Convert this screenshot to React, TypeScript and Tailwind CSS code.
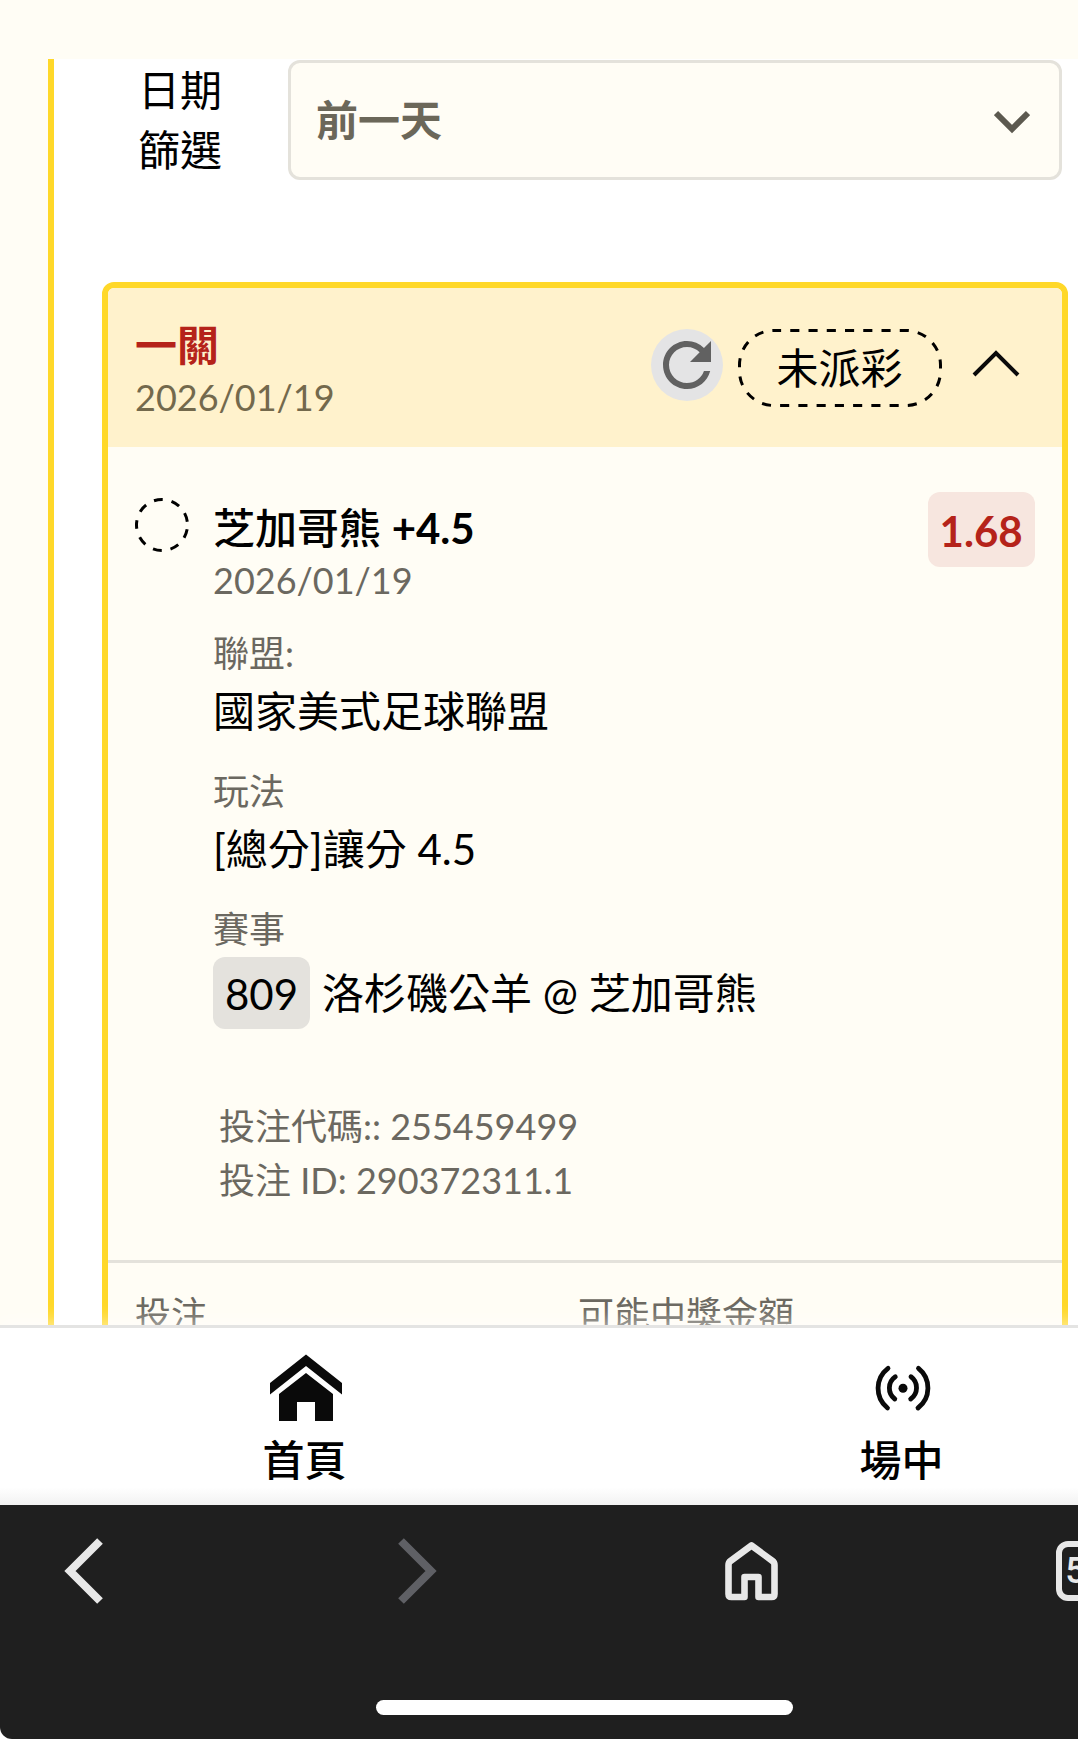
import React, { FC, ReactNode } from 'react';
import { MdRefresh } from 'react-icons/md';

interface Bet {
  title: string;
  date: string;
  team: string;
  handicap: string;
  odds: string;
  league: string;
  market: string;
  eventNo: string;
  event: string;
  code: string;
  id: string;
}

const bet: Bet = {
  title: '一關',
  date: '2026/01/19',
  team: '芝加哥熊',
  handicap: '+4.5',
  odds: '1.68',
  league: '國家美式足球聯盟',
  market: '[總分]讓分 4.5',
  eventNo: '809',
  event: '洛杉磯公羊 @ 芝加哥熊',
  code: '255459499',
  id: '290372311.1',
};

const DateFilter: FC = () => (
  <div className="flex pt-px pl-9 pr-1.5">
    <label htmlFor="date-filter" className="w-21 shrink-0 text-[42px] leading-[60px]">
      日期篩選
    </label>
    <div className="relative ml-[66px] flex-1">
      <select
        id="date-filter"
        defaultValue="yesterday"
        className="h-[120px] w-full appearance-none rounded-xl border-3 border-[#e4e2db] bg-[#fffdf5] pl-[25px] pr-20 text-[42px] font-bold text-[#6b6759]"
      >
        <option value="yesterday">前一天</option>
      </select>
      <svg
        className="pointer-events-none absolute top-[50px] right-8 h-6 w-9"
        viewBox="0 0 36 24"
        fill="none"
        stroke="#5c594f"
        strokeWidth="6"
      >
        <path d="M2 3l16 16L34 3" />
      </svg>
    </div>
  </div>
);

const StatusPill: FC<{ children: ReactNode }> = ({ children }) => (
  <div className="relative flex h-[78px] w-[204px] items-center justify-center text-[42px] leading-[54px]">
    <svg className="absolute inset-0" width="204" height="78" fill="none" stroke="black" strokeWidth="3">
      <rect
        x="1.5"
        y="1.5"
        width="201"
        height="75"
        rx="34.5"
        strokeDasharray="9.12 9.13"
        strokeDashoffset="2"
      />
    </svg>
    <span>{children}</span>
  </div>
);

const Detail: FC<{ label: string; children: ReactNode }> = ({ label, children }) => (
  <div>
    <dt className="mb-0.5 text-4xl leading-[52px] text-[#6b6860]">{label}</dt>
    <dd className="text-[42px] leading-[60px]">{children}</dd>
  </div>
);

const BetCard: FC<{ bet: Bet }> = ({ bet }) => (
  <article className="mt-[102px] overflow-hidden rounded-xl border-6 border-[#ffd829] bg-[#fffdf5]">
    <header className="flex items-start bg-[#fff2cc] pt-[31px] pr-[30px] pb-6 pl-[27px]">
      <div className="flex-1">
        <h2 className="text-[42px] leading-[52px] font-bold text-[#b5231a]">{bet.title}</h2>
        <p className="text-4xl leading-[52px] text-[#73694c]">{bet.date}</p>
      </div>
      <div className="flex pt-2.5">
        <button aria-label="重新整理" className="mr-[15px] h-18 w-18 rounded-full bg-[#e4e4e5] text-[#616161]">
          <MdRefresh className="h-18 w-18" />
        </button>
        <StatusPill>未派彩</StatusPill>
        <button aria-label="收合" className="ml-[18px] h-18 w-18">
          <svg className="h-18 w-18" viewBox="0 0 72 72" fill="none" stroke="#0a0a0a" strokeWidth="4">
            <path d="M14 46l22-22 22 22" />
          </svg>
        </button>
      </div>
    </header>

    <div className="flex items-start gap-6 px-[27px] pb-[53px]">
      <svg className="mt-[51px] shrink-0" width="54" height="54" fill="none" stroke="black" strokeWidth="3">
        <circle cx="27" cy="27" r="25.5" strokeDasharray="8.9 8.9" strokeDashoffset="-4.45" />
      </svg>
      <div className="flex-1 pt-[55px]">
        <h3 className="text-[42px] leading-[52px] font-medium">
          {bet.team} <span className="font-bold">{bet.handicap}</span>
        </h3>
        <p className="text-4xl leading-[52px] text-[#6b6860]">{bet.date}</p>
        <dl className="mt-[21px] flex flex-col gap-6">
          <Detail label="聯盟:">{bet.league}</Detail>
          <Detail label="玩法">{bet.market}</Detail>
          <Detail label="賽事">
            <span className="flex items-center gap-3">
              <span className="rounded-xl bg-[#e4e2dd] px-3 pt-[7px] pb-[5px]">{bet.eventNo}</span>
              <span>{bet.event}</span>
            </span>
          </Detail>
        </dl>
        <div className="mt-[70px] pl-1.5 text-4xl leading-[54px] text-[#6b6860]">
          <p>投注代碼:: {bet.code}</p>
          <p>投注 ID: {bet.id}</p>
        </div>
      </div>
      <div className="mt-[45px] rounded-xl bg-[#f7e6df] px-3 pt-[3px] text-[42px] leading-[72px] font-bold text-[#b5231a]">
        {bet.odds}
      </div>
    </div>

    <footer className="flex border-t-3 border-[#e4e2db] px-[27px] py-6 text-4xl leading-[54px] text-[#6b6860]">
      <span className="w-[443px]">投注</span>
      <span>可能中獎金額</span>
    </footer>
  </article>
);

const NavItem: FC<{ label: string; children: ReactNode }> = ({ label, children }) => (
  <a href="#" className="flex w-[51.3%] shrink-0 flex-col items-center text-[42px] leading-[54px] font-medium">
    {children}
    <span>{label}</span>
  </a>
);

const TabBar: FC = () => (
  <nav className="relative flex h-[180px] shrink-0 border-t-3 border-[#e4e4e3] bg-linear-to-b from-white from-90% to-[#f2f2f2] pt-6 pl-1.5 shadow-[0_-4px_16px_rgba(255,255,255,0.5)]">
    <NavItem label="首頁">
      <svg className="mb-[9px] ml-1 h-18 w-18" viewBox="0 0 72 72" fill="#0a0a0a">
        <path d="M36 2.500L72 31v11.500L36 14 0 42.500V31z" />
        <path d="M36 21L63 42v27H45V50H27v19H9V42z" />
      </svg>
    </NavItem>
    <NavItem label="場中">
      <svg
        className="mb-[9px] ml-1 h-18 w-18"
        viewBox="0 0 72 72"
        fill="none"
        stroke="#0a0a0a"
        strokeWidth="4.8"
        strokeLinecap="round"
      >
        <path d="M21 16.300A25.200 25.200 0 0 0 20.500 56" />
        <path d="M51.500 16.300A25.200 25.200 0 0 1 51 56" />
        <path d="M28.300 24.800A13.700 13.700 0 0 0 27.800 47" />
        <path d="M44 24.800A13.700 13.700 0 0 1 43.700 47" />
        <circle cx="36" cy="36.3" r="4.5" fill="#0a0a0a" stroke="none" />
      </svg>
    </NavItem>
  </nav>
);

const BrowserBar: FC = () => (
  <div className="relative bg-white">
    <div className="flex h-[234px] flex-col rounded-b-xl bg-[#1f1f1f] text-[#e8e8e8]">
      <div className="flex justify-between px-12 pt-[30px]">
        <button aria-label="上一頁">
          <svg className="h-21 w-18" viewBox="0 0 72 84" fill="none" stroke="currentColor" strokeWidth="8">
            <path d="M52 6L22 36l30 30" />
          </svg>
        </button>
        <button aria-label="下一頁" disabled className="text-[#5f6065]">
          <svg className="h-21 w-18" viewBox="0 0 72 84" fill="none" stroke="currentColor" strokeWidth="8">
            <path d="M19 6l30 30-30 30" />
          </svg>
        </button>
        <button aria-label="首頁">
          <svg
            className="h-21 w-18"
            viewBox="0 0 72 84"
            fill="none"
            stroke="currentColor"
            strokeWidth="6.6"
            strokeLinejoin="round"
          >
            <path d="M35.500 10.500L14.500 26q-2 1.500-2 4v29q0 3 3 3h13V42h14v20h13q3 0 3-3V30q0-2.500-2-4z" />
          </svg>
        </button>
        <button aria-label="分頁" className="flex h-21 w-18 justify-center pt-1.5">
          <span className="flex h-15 w-15 items-center justify-center rounded-xl border-6 border-[#e8e8e8] font-[Roboto,sans-serif] text-4xl font-medium">
            56
          </span>
        </button>
      </div>
      <div className="mx-auto mt-auto mb-6 h-[15px] w-[417px] rounded-full bg-white" />
    </div>
  </div>
);

export default function App() {
  return (
    <div lang="zh-Hant" className="h-screen overflow-hidden font-[Lato,'Noto_Sans_CJK_TC',sans-serif] text-black">
      {/* the phone page is a little wider than the window, the overflow is cut on the right */}
      <div className="flex h-full w-[108.5%] flex-col bg-[#fffdf5]">
        <main className="min-h-0 flex-1 overflow-hidden px-12 pt-[59px]">
          <section className="border-x-6 border-[#ffd829] bg-white px-12 pb-12">
            <DateFilter />
            <BetCard bet={bet} />
          </section>
        </main>
        <TabBar />
        <BrowserBar />
      </div>
    </div>
  );
}
